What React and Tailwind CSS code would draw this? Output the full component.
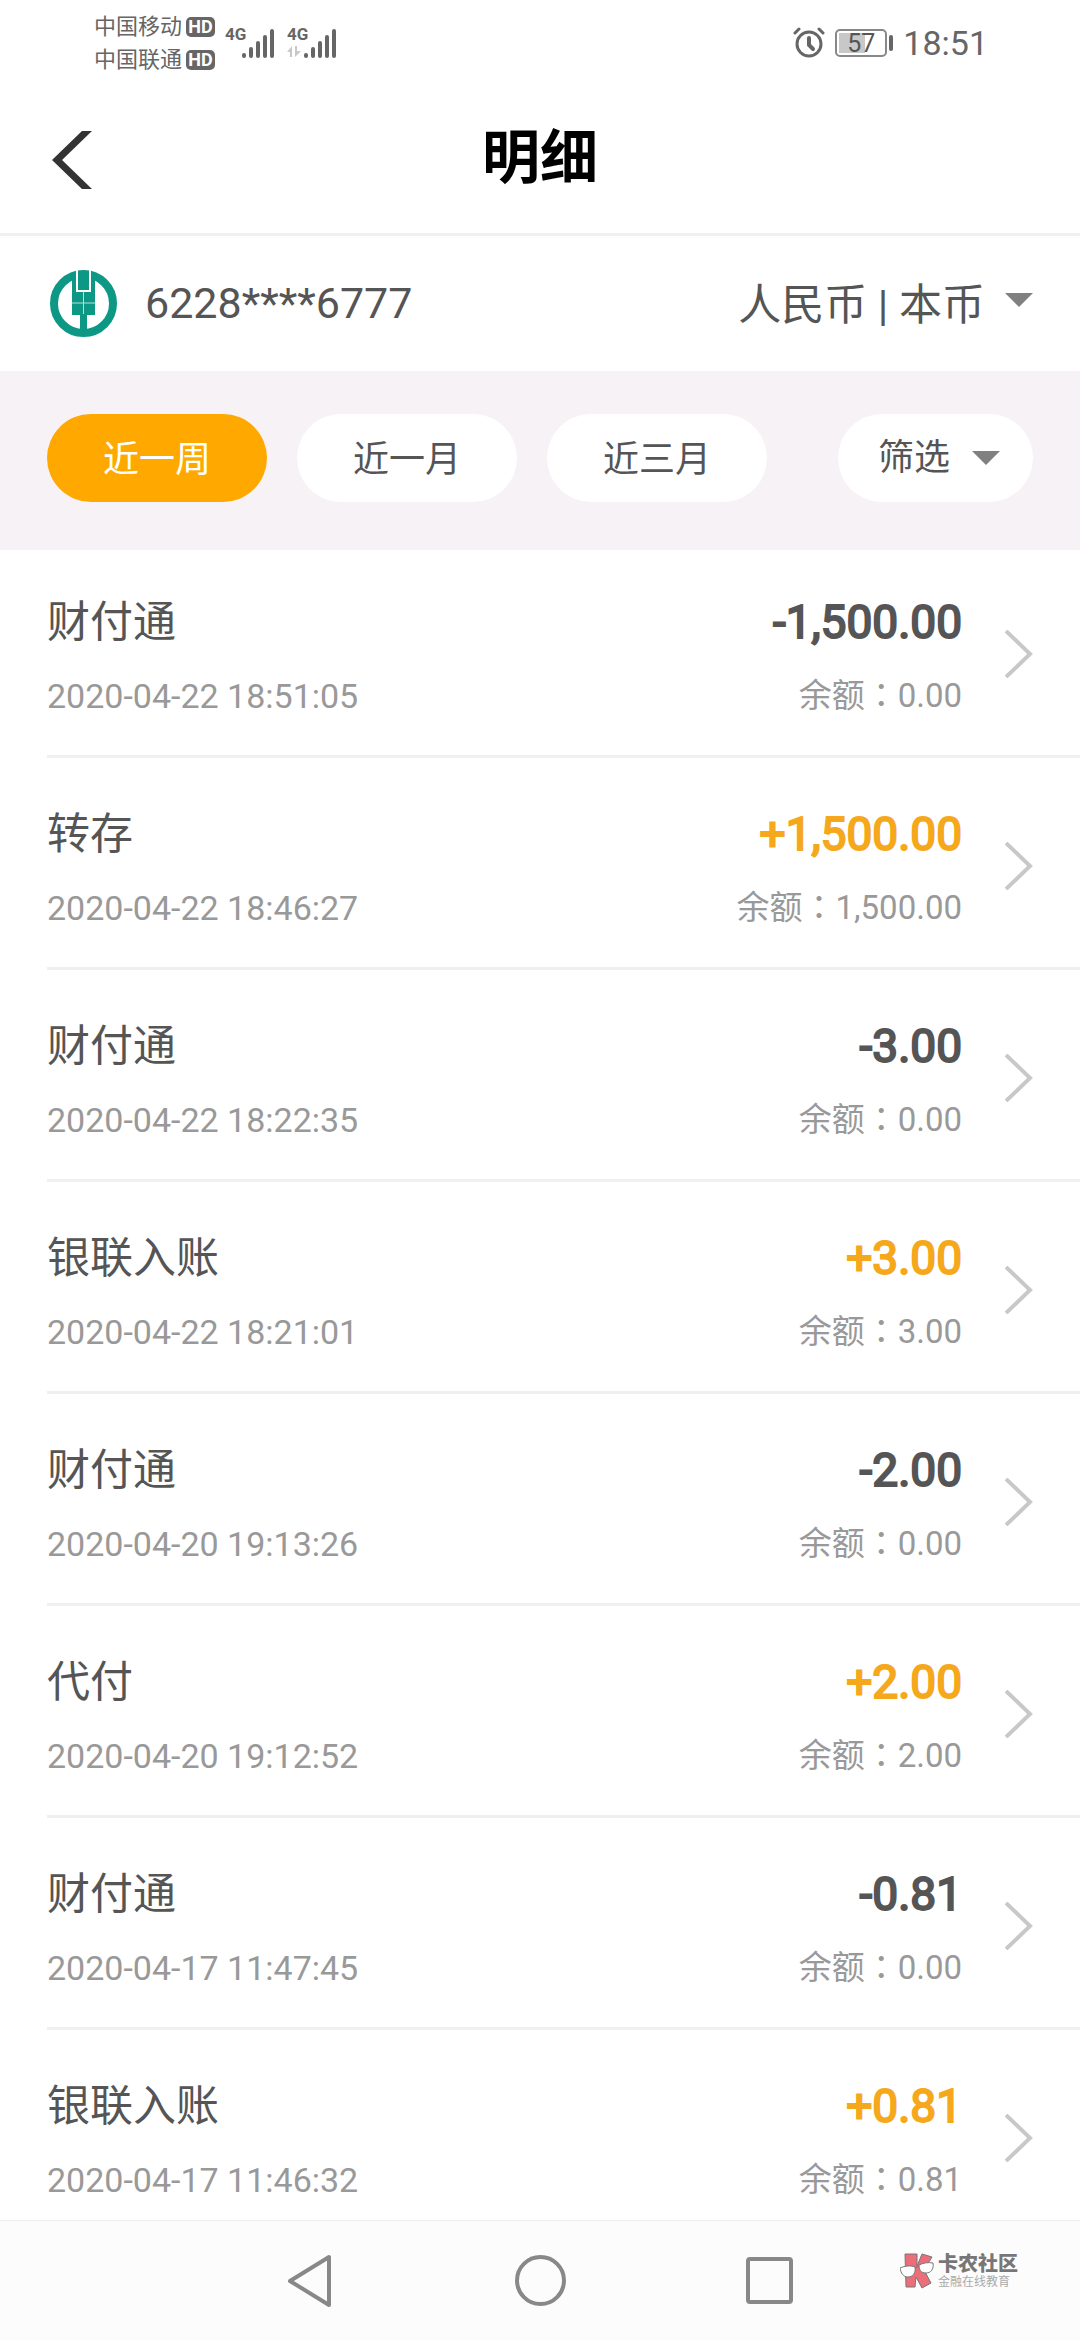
import React, { useState } from 'react';

const records = [
    { name: '财付通', time: '2020-04-22 18:51:05', amount: '-1,500.00', balance: '0.00' },
    { name: '转存', time: '2020-04-22 18:46:27', amount: '+1,500.00', balance: '1,500.00' },
    { name: '财付通', time: '2020-04-22 18:22:35', amount: '-3.00', balance: '0.00' },
    { name: '银联入账', time: '2020-04-22 18:21:01', amount: '+3.00', balance: '3.00' },
    { name: '财付通', time: '2020-04-20 19:13:26', amount: '-2.00', balance: '0.00' },
    { name: '代付', time: '2020-04-20 19:12:52', amount: '+2.00', balance: '2.00' },
    { name: '财付通', time: '2020-04-17 11:47:45', amount: '-0.81', balance: '0.00' },
    { name: '银联入账', time: '2020-04-17 11:46:32', amount: '+0.81', balance: '0.81' },
];

const periods = ['近一周', '近一月', '近三月'];

const HdBadge = () => (
    <span className="flex h-5 w-[29px] items-center justify-center rounded-[5px] bg-[#666] text-[18px] leading-none font-bold text-white">
        HD
    </span>
);

const Signal = ({ data }) => (
    <svg width="52" height="34" viewBox="0 0 52 34" className="overflow-visible">
        <text x="0" y="14" fontSize="17" fontWeight="700" fill="#666" fontFamily="Roboto">4G</text>
        {data && (
            <g fill="#c8c8c8">
                <path d="M0 26l5-6v11H3v-5z" />
                <path d="M8 20h2v5h4l-6 6z" />
            </g>
        )}
        <path
            d="M19 29v1M26 23v7M33 17v13M40 11v19M47 5v25"
            stroke="#666"
            strokeWidth="4"
            strokeLinecap="round"
        />
    </svg>
);

const StatusBar = () => (
    <div className="flex h-[86px] shrink-0 items-center justify-between px-[92px] text-[#666]">
        <div className="flex items-center gap-[10px] pl-[2px]">
            <div className="flex flex-col text-[22px] leading-[33px]">
                <div className="flex items-center gap-1">中国移动<HdBadge /></div>
                <div className="flex items-center gap-1">中国联通<HdBadge /></div>
            </div>
            <Signal />
            <Signal data />
        </div>
        <div className="flex items-center gap-[10px]">
            <svg width="32" height="32" viewBox="0 0 32 32" fill="none" stroke="#666" strokeLinecap="round">
                <circle cx="16" cy="17" r="12" strokeWidth="3" />
                <path d="M16 11v7l4 4" strokeWidth="4" />
                <path d="M2 6l4-4M30 6l-4-4" strokeWidth="3" />
            </svg>
            <div className="flex items-center gap-[2px]">
                <div className="relative flex h-7 w-[52px] items-center justify-center rounded-[5px] border-2 border-[#888]">
                    <span className="absolute top-[2px] bottom-[2px] left-[2px] w-[26px] bg-[#c8c8c8]" />
                    <span className="relative text-[25px] leading-none text-[#555]">57</span>
                </div>
                <span className="h-4 w-1 rounded-sm bg-[#666]" />
            </div>
            <span className="text-[34px] leading-none">18:51</span>
        </div>
    </div>
);

const Caret = () => (
    <svg width="28" height="14" viewBox="0 0 28 14" fill="#808080">
        <path d="M0 0h28L14 14z" />
    </svg>
);

const BankLogo = () => (
    <svg width="67" height="67" viewBox="0 0 67 67">
        <circle cx="33.5" cy="33.5" r="29.5" fill="#fff" stroke="#0c9884" strokeWidth="8" />
        <path d="M22 3h23v42h-8v20h-7V45h-8z" fill="#0c9884" />
        <path d="M27 0v21h13V0" fill="none" stroke="#fff" strokeWidth="2" />
        <path d="M33.5 22v22M22 33h23" stroke="#b5e0d9" strokeWidth="1" />
    </svg>
);

const Record = ({ item }) => {
    const income = item.amount.startsWith('+');

    return (
        <li className="group pl-[47px]">
            <button className="flex w-full items-center border-b-[3px] border-[#f0f0f0] pt-[46px] pr-[47px] pb-[35px] text-left group-first:pt-[42px]">
                <span className="flex flex-1 flex-col gap-5">
                    <span className="text-[43px] leading-[60px] text-[#555]">{item.name}</span>
                    <span className="text-[34px] leading-[48px] text-[#999]">{item.time}</span>
                </span>
                <span className="flex flex-col items-end gap-5">
                    <span
                        className={`text-[46px] leading-[60px] [-webkit-text-stroke:2px] ${income ? 'text-[#f5a81c]' : 'text-[#555]'}`}
                    >
                        {item.amount}
                    </span>
                    <span className="text-[33px] leading-[48px] text-[#999]">
                        余额<span className="font-['Noto_Sans_CJK_TC',sans-serif] leading-none">：</span>{item.balance}
                    </span>
                </span>
                <svg className="mb-1 ml-[43px]" width="28" height="48" viewBox="0 0 28 48" fill="none" stroke="#c8c8c8" strokeWidth="4">
                    <path d="M1 1l24 23L1 47" />
                </svg>
            </button>
        </li>
    );
};

const Watermark = () => (
    <div className="flex items-center gap-1 pb-5">
        <svg width="34" height="36" viewBox="0 0 34 36" stroke="#777" strokeWidth="1">
            <path d="M5 1h12v12l5-12 10 3-8 13 7 13-9 5-6-11-1 10H6z" fill="#ea6f7a" />
            <path d="M0 15c5-2 10-3 15-1 1 6-2 10-7 10s-7-4-8-9zM19 12c4-2 9-3 14-2 1 6-2 10-7 10s-7-3-7-8z" fill="#fff" />
            <path d="M15 15l4-2" />
        </svg>
        <div className="flex flex-col">
            <span className="text-[20px] leading-[22px] font-black text-[#777]">卡农社区</span>
            <span className="text-[12px] leading-[14px] text-[#aaa]">金融在线教育</span>
        </div>
    </div>
);

const App = () => {
    const [period, setPeriod] = useState('近一周');

    return (
        <div className="flex h-screen flex-col bg-white font-[Roboto,'Noto_Sans_CJK_SC',sans-serif]">
            <StatusBar />

            <header className="grid h-[150px] shrink-0 grid-cols-[1fr_auto_1fr] items-center border-b-[3px] border-[#f0f0f0] px-[52px]">
                <button aria-label="返回" className="justify-self-start">
                    <svg width="40" height="58" viewBox="0 0 40 58" fill="#333">
                        <path d="M30 0h10L10 29l30 29H30L0 29z" />
                    </svg>
                </button>
                <h1 className="pb-1 text-[58px] leading-[80px] font-bold text-black">明细</h1>
            </header>

            <section className="flex h-[135px] shrink-0 items-center justify-between pr-[47px] pl-[50px] text-[43px] text-[#555]">
                <div className="flex items-center gap-7">
                    <BankLogo />
                    <span>6228****6777</span>
                </div>
                <button className="flex items-center gap-5">
                    <span className="pt-1">人民币 | 本币</span>
                    <span className="pb-2">
                        <Caret />
                    </span>
                </button>
            </section>

            <nav className="flex h-[179px] shrink-0 items-start gap-[30px] bg-[#f6f2f6] px-[47px] pt-[43px] text-[36px] text-[#555]">
                {periods.map((name) => (
                    <button
                        key={name}
                        onClick={() => setPeriod(name)}
                        className={`h-[88px] w-[220px] rounded-full pt-1 ${period === name ? 'bg-[#ffa800] text-white' : 'bg-white'}`}
                    >
                        {name}
                    </button>
                ))}
                <button className="ml-auto flex h-[88px] w-[195px] items-center justify-end gap-[22px] rounded-full bg-white pr-[33px]">
                    筛选
                    <Caret />
                </button>
            </nav>

            <ul className="min-h-0 flex-1 overflow-y-auto [scrollbar-width:none]">
                {records.map((item) => (
                    <Record key={item.time} item={item} />
                ))}
            </ul>

            <footer className="grid h-[120px] shrink-0 grid-cols-[1fr_auto_1fr] items-center border-t border-[#eee] bg-[#fcfcfc]">
                <button aria-label="后退" className="mr-[183px] justify-self-end">
                    <svg width="46" height="56" viewBox="0 0 46 56" fill="none" stroke="#888" strokeWidth="4" strokeLinejoin="round">
                        <path d="M43 4v48L4 28z" />
                    </svg>
                </button>
                <button aria-label="主页" className="size-[51px] rounded-full border-4 border-[#888]" />
                <div className="flex items-center justify-between pr-[62px] pl-[180px]">
                    <button aria-label="最近任务" className="size-[47px] rounded border-4 border-[#888]" />
                    <Watermark />
                </div>
            </footer>
        </div>
    );
};

export default App;
